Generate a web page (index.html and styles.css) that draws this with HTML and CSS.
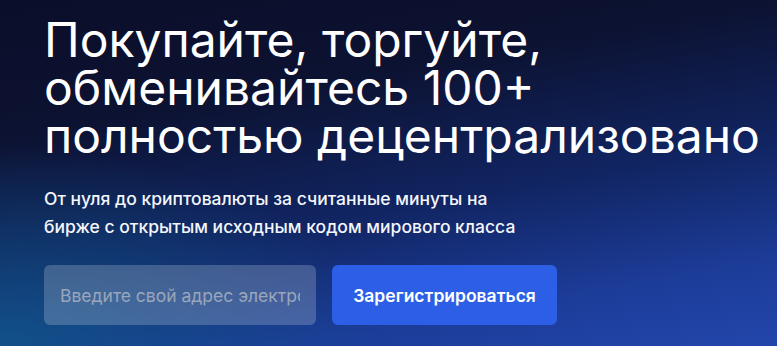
FILE: index.html
```html
<!DOCTYPE html>
<html lang="ru">
<head>
    <meta charset="UTF-8">
    <meta name="viewport" content="width=device-width, initial-scale=1.0">
    <title>Децентрализованная биржа</title>
    <link rel="stylesheet" href="styles.css">
</head>
<body>
<section class="hero">
    <h1 class="hero-title">Покупайте, торгуйте,<br>обменивайтесь 100+<br>полностью децентрализовано</h1>
    <p class="hero-text">От нуля до криптовалюты за считанные минуты на<br>бирже с открытым исходным кодом мирового класса</p>
    <form class="signup" onsubmit="return false">
        <input class="signup-input" type="email" placeholder="Введите свой адрес электронной почты">
        <button class="signup-button" type="submit">Зарегистрироваться</button>
    </form>
</section>
</body>
</html>
```

FILE: styles.css
```css
html, body {
    margin: 0;
    padding: 0;
    height: 100%;
}
body {
    font-family: 'Inter', 'Noto Sans', 'Liberation Sans', sans-serif;
    color: #ffffff;
    background-color: #0b0e2a;
    overflow: hidden;
}
.hero {
    min-height: 100%;
    box-sizing: border-box;
    padding: 16px 44px 0;
    background:
        radial-gradient(ellipse 380px 200px at 0% 100%, rgba(16, 90, 140, 0.75), rgba(16, 90, 140, 0) 100%),
        linear-gradient(170deg, #0b0e2a 0%, #0c1231 28%, #112563 58%, #1c3c98 82%, #2346ac 100%);
}
.hero-title {
    margin: 0;
    font-size: 48px;
    line-height: 48px;
    font-weight: 400;
    white-space: nowrap;
}
.hero-text {
    margin: 25px 0 0;
    font-size: 17.5px;
    line-height: 28px;
    font-weight: 500;
    color: #f4f6fb;
}
.signup {
    display: flex;
    gap: 16px;
    margin-top: 24px;
}
.signup-input {
    width: 272px;
    height: 60px;
    box-sizing: border-box;
    padding: 0 16px;
    border: none;
    border-radius: 6px;
    background: rgba(255, 255, 255, 0.2);
    color: #ffffff;
    font-family: inherit;
    font-size: 17.5px;
    outline: none;
}
.signup-input::placeholder {
    color: #9aa6bb;
}
.signup-button {
    width: 225px;
    height: 60px;
    border: none;
    border-radius: 6px;
    background: #2d5fe6;
    color: #ffffff;
    font-family: inherit;
    font-size: 17.5px;
    font-weight: 600;
    cursor: pointer;
}
```
